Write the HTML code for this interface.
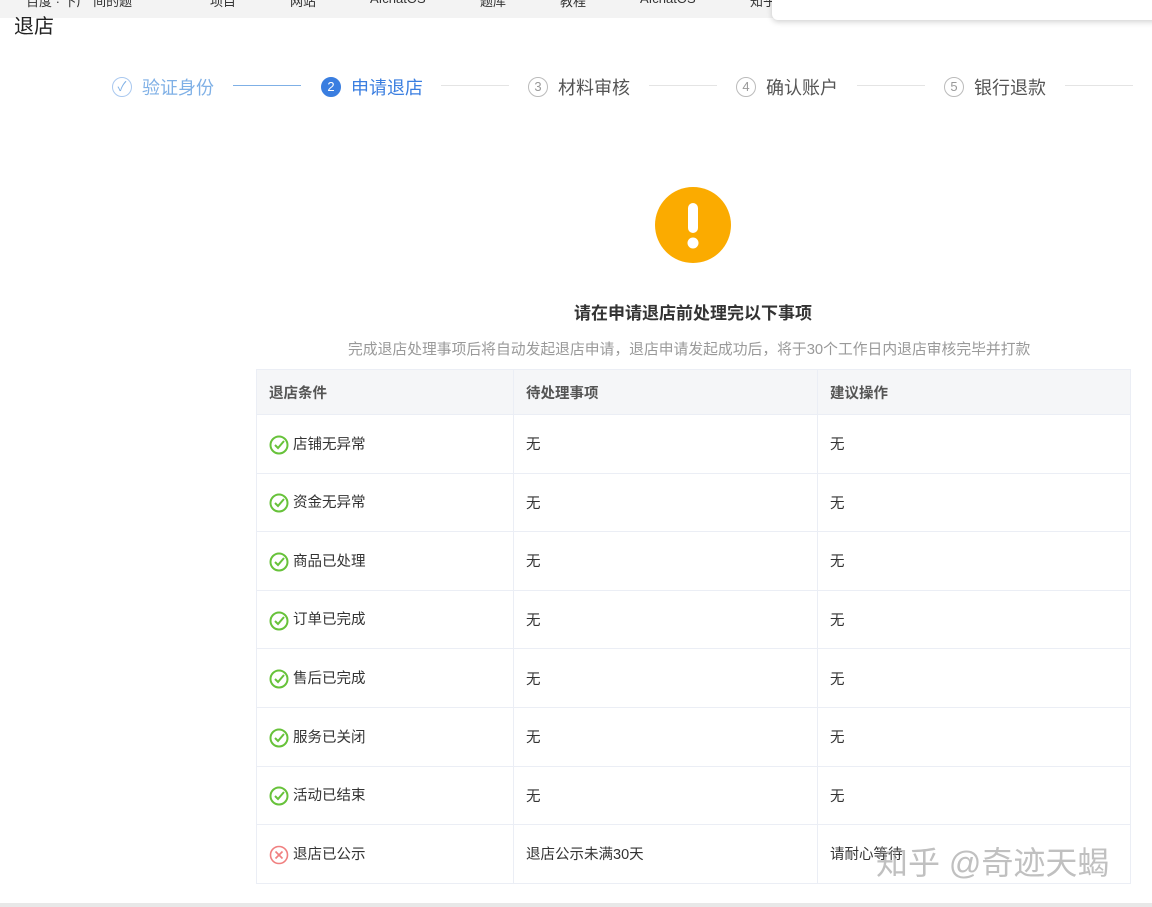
<!DOCTYPE html>
<html><head><meta charset="utf-8"><style>
*{margin:0;padding:0;box-sizing:border-box}
html,body{width:1152px;height:907px;overflow:hidden}
body{background:#fff;font-family:"Liberation Sans","Noto Sans CJK SC",sans-serif;position:relative;color:#333}
.bar{position:absolute;left:0;top:0;width:1152px;height:18px;background:#f3f3f3;font-size:13px;color:#333;white-space:nowrap;overflow:hidden}
.bar span{position:absolute;top:-9px}
.pop{position:absolute;left:772px;top:-6px;width:390px;height:26px;background:#fff;border-radius:6px;box-shadow:0 2px 6px rgba(0,0,0,.18)}
.title{position:absolute;left:14px;top:10px;font-size:20px;color:#222}
.step{position:absolute;top:74px;font-size:18px;display:flex;align-items:center;gap:10px;white-space:nowrap}
.num{width:20px;height:20px;border-radius:50%;border:1px solid #bbb;font-size:13px;text-align:center;line-height:18px;color:#999}
.line{position:absolute;top:85px;height:1px;background:#e4e4e4}
.icon{position:absolute;left:655px;top:187px;width:76px;height:76px;border-radius:50%;background:#fbab00}
.h{position:absolute;left:0;width:1386px;text-align:center;top:299px;font-size:17px;font-weight:bold;color:#333}
.sub{position:absolute;left:348px;top:338px;font-size:14.8px;color:#999;white-space:nowrap}
table{position:absolute;left:256px;top:369px;width:875px;border-collapse:collapse;font-size:14.5px}
td,th{border:1px solid #ebeef5;padding:0 12px;text-align:left;color:#333;font-weight:normal}
th{height:45px;background:#f5f6f8;font-weight:bold;color:#555}
td{height:58.6px}
.c{display:inline-block;vertical-align:middle;margin-right:4px}
.wm{position:absolute;left:876px;top:838px;font-size:32px;color:rgba(150,150,150,.6);white-space:nowrap}
</style></head><body>
<div class="bar"><span style="left:26px">百度 · 下广 间的题</span><span style="left:210px">项目</span><span style="left:290px">网站</span><span style="left:370px">AIchatOS</span><span style="left:480px">题库</span><span style="left:560px">教程</span><span style="left:640px">AIchatOS</span><span style="left:750px">知乎</span></div>
<div class="pop"></div>
<div class="title">退店</div>
<div class="step" style="left:112px;color:#7fb0e6"><div class="num" style="border-color:#a9c8ef;color:#7fb0e6">✓</div>验证身份</div>
<div class="line" style="left:233px;width:68px;background:#7fb0e6"></div>
<div class="step" style="left:321px;color:#3a7ee0"><div class="num" style="background:#3a7ee0;border-color:#3a7ee0;color:#fff">2</div>申请退店</div>
<div class="line" style="left:441px;width:68px"></div>
<div class="step" style="left:528px;color:#555"><div class="num">3</div>材料审核</div>
<div class="line" style="left:649px;width:68px"></div>
<div class="step" style="left:736px;color:#555"><div class="num">4</div>确认账户</div>
<div class="line" style="left:857px;width:68px"></div>
<div class="step" style="left:944px;color:#555"><div class="num">5</div>银行退款</div>
<div class="line" style="left:1065px;width:68px"></div>
<div class="icon"><svg width="76" height="76"><rect x="33" y="16" width="10" height="30" rx="5" fill="#fff"/><circle cx="38" cy="56" r="5.5" fill="#fff"/></svg></div>
<div class="h">请在申请退店前处理完以下事项</div>
<div class="sub">完成退店处理事项后将自动发起退店申请，退店申请发起成功后，将于30个工作日内退店审核完毕并打款</div>
<table>
<tr><th style="width:257px">退店条件</th><th style="width:304px">待处理事项</th><th>建议操作</th></tr>
<tr><td><svg class="c" width="20" height="20"><circle cx="10" cy="10" r="8.5" fill="none" stroke="#67c23a" stroke-width="2"/><path d="M6 10l3 3 6-7" fill="none" stroke="#67c23a" stroke-width="2"/></svg>店铺无异常</td><td>无</td><td>无</td></tr>
<tr><td><svg class="c" width="20" height="20"><circle cx="10" cy="10" r="8.5" fill="none" stroke="#67c23a" stroke-width="2"/><path d="M6 10l3 3 6-7" fill="none" stroke="#67c23a" stroke-width="2"/></svg>资金无异常</td><td>无</td><td>无</td></tr>
<tr><td><svg class="c" width="20" height="20"><circle cx="10" cy="10" r="8.5" fill="none" stroke="#67c23a" stroke-width="2"/><path d="M6 10l3 3 6-7" fill="none" stroke="#67c23a" stroke-width="2"/></svg>商品已处理</td><td>无</td><td>无</td></tr>
<tr><td><svg class="c" width="20" height="20"><circle cx="10" cy="10" r="8.5" fill="none" stroke="#67c23a" stroke-width="2"/><path d="M6 10l3 3 6-7" fill="none" stroke="#67c23a" stroke-width="2"/></svg>订单已完成</td><td>无</td><td>无</td></tr>
<tr><td><svg class="c" width="20" height="20"><circle cx="10" cy="10" r="8.5" fill="none" stroke="#67c23a" stroke-width="2"/><path d="M6 10l3 3 6-7" fill="none" stroke="#67c23a" stroke-width="2"/></svg>售后已完成</td><td>无</td><td>无</td></tr>
<tr><td><svg class="c" width="20" height="20"><circle cx="10" cy="10" r="8.5" fill="none" stroke="#67c23a" stroke-width="2"/><path d="M6 10l3 3 6-7" fill="none" stroke="#67c23a" stroke-width="2"/></svg>服务已关闭</td><td>无</td><td>无</td></tr>
<tr><td><svg class="c" width="20" height="20"><circle cx="10" cy="10" r="8.5" fill="none" stroke="#67c23a" stroke-width="2"/><path d="M6 10l3 3 6-7" fill="none" stroke="#67c23a" stroke-width="2"/></svg>活动已结束</td><td>无</td><td>无</td></tr>
<tr><td><svg class="c" width="20" height="20"><circle cx="10" cy="10" r="8.5" fill="none" stroke="#f08080" stroke-width="1.6"/><path d="M6.5 6.5l7 7M13.5 6.5l-7 7" stroke="#f08080" stroke-width="1.6"/></svg>退店已公示</td><td>退店公示未满30天</td><td>请耐心等待</td></tr>
</table>
<div class="wm">知乎 @奇迹天蝎</div>
<div style="position:absolute;left:0;top:903px;width:1152px;height:4px;background:#e8e8e8"></div>
</body></html>
